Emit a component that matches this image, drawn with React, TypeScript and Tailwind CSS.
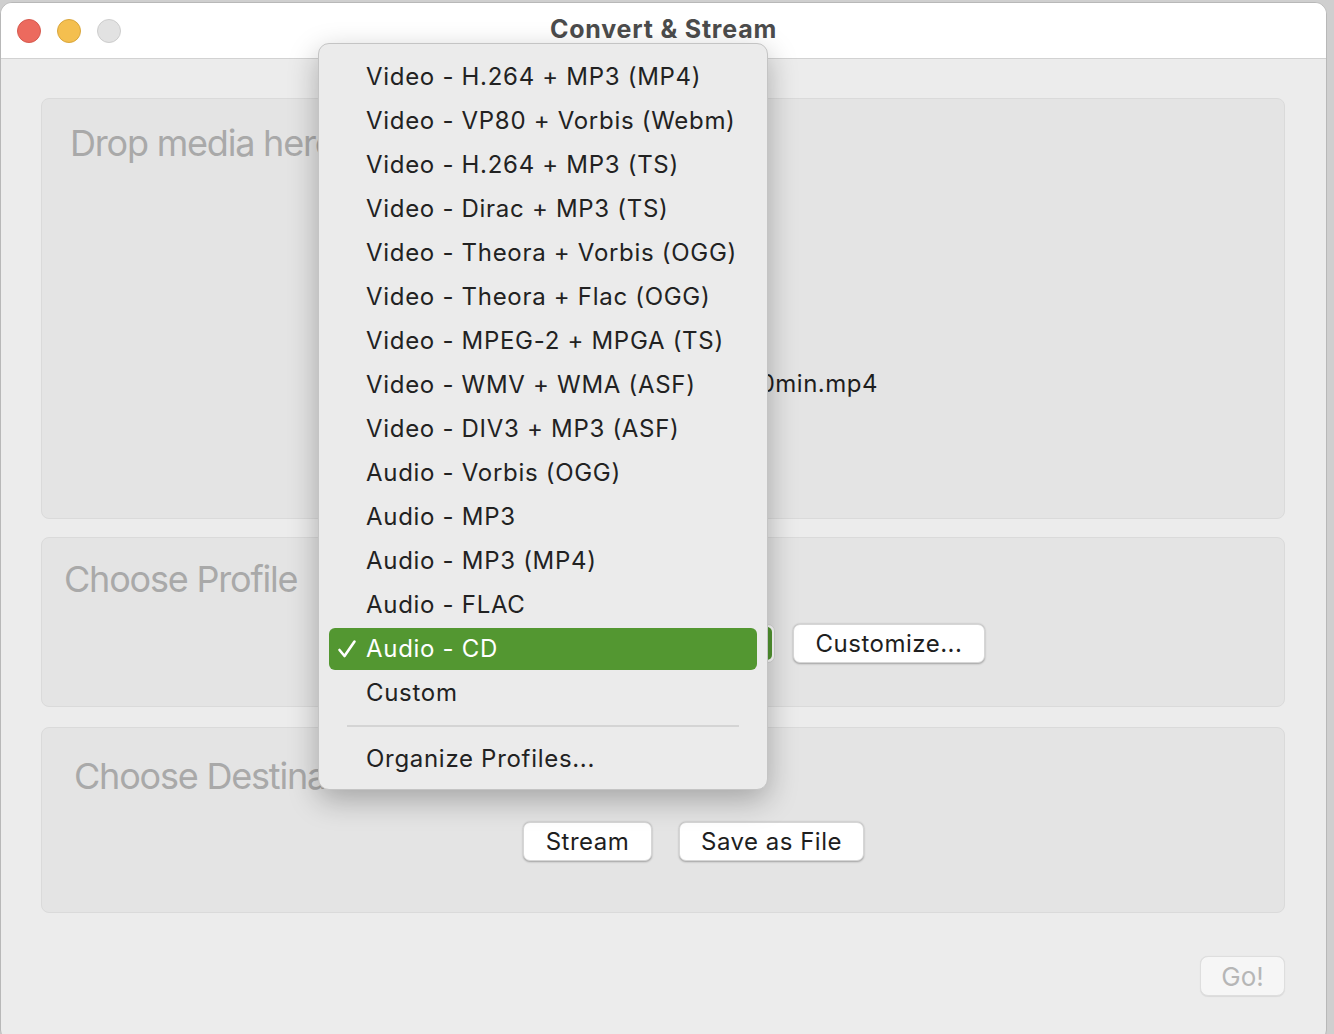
import React from "react";

const profiles = [
  "Video - H.264 + MP3 (MP4)",
  "Video - VP80 + Vorbis (Webm)",
  "Video - H.264 + MP3 (TS)",
  "Video - Dirac + MP3 (TS)",
  "Video - Theora + Vorbis (OGG)",
  "Video - Theora + Flac (OGG)",
  "Video - MPEG-2 + MPGA (TS)",
  "Video - WMV + WMA (ASF)",
  "Video - DIV3 + MP3 (ASF)",
  "Audio - Vorbis (OGG)",
  "Audio - MP3",
  "Audio - MP3 (MP4)",
  "Audio - FLAC",
  "Audio - CD",
  "Custom",
];

const selected = "Audio - CD";

function MacButton({ children, className = "" }: { children: React.ReactNode; className?: string }) {
  return (
    <button
      className={
        "h-[39px] rounded-[7px] bg-white text-[24px] tracking-[0.5px] text-[#1e1e1e] shadow-[0_0.5px_2px_rgba(0,0,0,0.3)] border border-[#d6d6d6] flex items-center justify-center " +
        className
      }
    >
      {children}
    </button>
  );
}

function Check() {
  return (
    <svg width="20" height="20" viewBox="0 0 20 20" className="block">
      <path d="M2.5 11 L7.5 17 L17.5 2.5" fill="none" stroke="white" strokeWidth="2.6" strokeLinecap="round" strokeLinejoin="round" />
    </svg>
  );
}

function ProfileMenu() {
  return (
    <div className="absolute left-[318px] top-[43px] w-[450px] rounded-[11px] bg-[#ebebeb] border border-[#c4c4c4] shadow-[0_10px_30px_rgba(0,0,0,0.28)] pt-[11px] pb-[8px]">
      {profiles.map((p) => {
        const on = p === selected;
        return (
          <div key={p} className="h-[44px] px-[10px] flex items-center">
            <div
              className={
                "h-[42px] w-full rounded-[6px] flex items-center pl-[8px] text-[24px] tracking-[0.7px] " +
                (on ? "bg-[#539731] text-white" : "text-[#222222]")
              }
            >
              <span className="w-[29px]">{on ? <Check /> : null}</span>
              <span>{p}</span>
            </div>
          </div>
        );
      })}
      <div className="mx-[28px] my-[10px] h-[2px] bg-[#d4d4d4]" />
      <div className="h-[44px] px-[10px] flex items-center">
        <div className="pl-[37px] text-[24px] tracking-[0.7px] text-[#222222]">Organize Profiles...</div>
      </div>
    </div>
  );
}

export default function App() {
  return (
    <div
      className="relative w-[1334px] h-[1034px] bg-[#cfcfcf] overflow-hidden"
      style={{ fontFamily: "Inter, 'Noto Sans', sans-serif" }}
    >
      <div className="mt-[2px] w-[1327px] h-[1040px] rounded-[12px] bg-[#ececec] border border-[#b8b8b8] overflow-hidden flex flex-col">
        {/* title bar */}
        <div className="relative h-[56px] shrink-0 bg-white border-b border-[#d2d2d2] flex items-center justify-center">
          <div className="absolute left-[16px] top-[16px] flex gap-[16px]">
            <div className="w-[24px] h-[24px] rounded-full bg-[#ec6a5e] border border-[#d65a4f]" />
            <div className="w-[24px] h-[24px] rounded-full bg-[#f4bf4f] border border-[#d9a63c]" />
            <div className="w-[24px] h-[24px] rounded-full bg-[#e2e2e2] border border-[#cdcdcd]" />
          </div>
          <span className="text-[25px] font-bold text-[#4c4c4c] tracking-[0.8px] -mt-[2px]">Convert &amp; Stream</span>
        </div>

        {/* body */}
        <div className="flex flex-col px-[40px] pr-[41px]">
          <div className="mt-[39px] h-[421px] rounded-[8px] bg-[#e4e4e4] border border-[#dadada] flex flex-col">
            <div className="pl-[28px] pt-[24px] text-[36px] leading-[40px] text-[#a9a9a9] tracking-[-1.2px]">Drop media here</div>
            <div className="mt-[203px] w-[836px] text-right text-[24px] tracking-[0.5px] text-[#1e1e1e]">10min.mp4</div>
          </div>

          <div className="mt-[18px] h-[170px] rounded-[8px] bg-[#e4e4e4] border border-[#dadada] flex flex-col">
            <div className="pl-[22px] pt-[21px] text-[36px] leading-[40px] text-[#a9a9a9] tracking-[-1.2px]">Choose Profile</div>
            <div className="mt-[25px] flex items-center">
              <div className="ml-[300px] w-[433px] h-[39px] rounded-[7px] bg-white border border-[#d6d6d6] flex justify-end p-[2px]">
                <div className="w-[40px] h-full rounded-[5px] bg-[#539731]" />
              </div>
              <MacButton className="ml-[18px] w-[192px]">Customize...</MacButton>
            </div>
          </div>

          <div className="mt-[20px] h-[186px] rounded-[8px] bg-[#e4e4e4] border border-[#dadada] flex flex-col">
            <div className="pl-[32px] pt-[28px] text-[36px] leading-[40px] text-[#a9a9a9] tracking-[-1.2px]">Choose Destination</div>
            <div className="mt-[26px] flex gap-[27px] pl-[481px]">
              <MacButton className="w-[129px]">Stream</MacButton>
              <MacButton className="w-[185px]">Save as File</MacButton>
            </div>
          </div>

          <div className="mt-[43px] flex justify-end">
            <button className="w-[85px] h-[40px] rounded-[8px] bg-[#f6f6f6] border border-[#dedede] text-[26px] text-[#b6b6b6] shadow-[0_0.5px_1px_rgba(0,0,0,0.08)]">
              Go!
            </button>
          </div>
        </div>
      </div>

      <ProfileMenu />
    </div>
  );
}
